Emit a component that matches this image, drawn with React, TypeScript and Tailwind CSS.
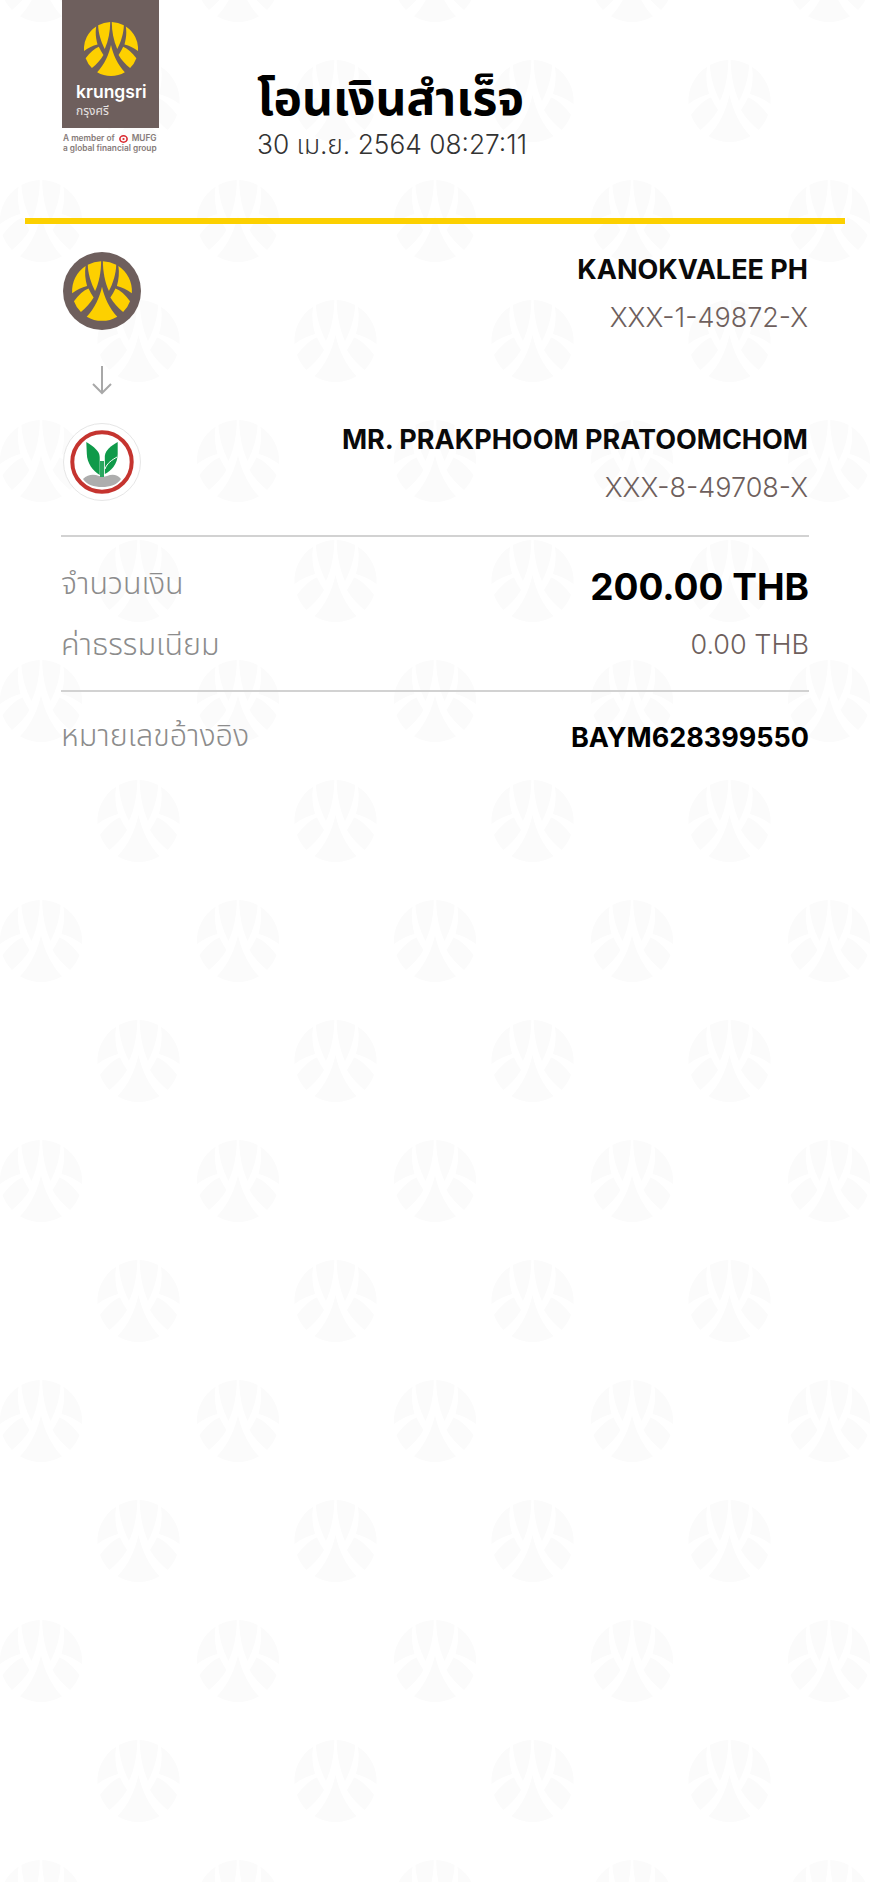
const LogoMark = ({ fill }: { fill: string }) => {
  const half = (
    <>
      <path d="M-1.2 -41A41 41 0 0 0 -19.5 -36C-19.5 -25 -15 -10 -9.5 0C-4 -12 -1.2 -27 -1.2 -41Z" />
      <path d="M-22.5 -34.3A41 41 0 0 0 -41 3C-34 -2 -28 -5 -20.5 -7C-23 -16 -24 -25 -22.5 -34.3Z" />
      <path d="M-18.5 -3.5C-25 -1 -32 5 -38.5 14A41 41 0 0 0 -29 29C-22 23 -16 17 -11.5 9C-14 5 -16.5 1 -18.5 -3.5Z" />
    </>
  );
  return (
    <g fill={fill}>
      {half}
      <g transform="scale(-1,1)">{half}</g>
      <path d="M0 -6C-3 8 -10 24 -21 35.2A41 41 0 0 0 21 35.2C10 24 3 8 0 -6Z" />
    </g>
  );
};

// faint emblem pattern behind the slip
const Watermark = () => (
  <svg className="absolute inset-0 h-full w-full" aria-hidden="true">
    <defs>
      <pattern id="wm" x="41" y="-19" width="197" height="240" patternUnits="userSpaceOnUse">
        <LogoMark fill="#fbfbfb" />
        <g transform="translate(197,0)">
          <LogoMark fill="#fbfbfb" />
        </g>
        <g transform="translate(0,240)">
          <LogoMark fill="#fbfbfb" />
        </g>
        <g transform="translate(197,240)">
          <LogoMark fill="#fbfbfb" />
        </g>
        <g transform="translate(97.5,120)">
          <LogoMark fill="#fbfbfb" />
        </g>
      </pattern>
    </defs>
    <rect width="100%" height="100%" fill="url(#wm)" />
  </svg>
);

const BrandLogo = () => (
  <div className="w-[97px] shrink-0">
    <div className="flex h-[128px] flex-col bg-[#6e5f5d] pt-[22px]">
      <svg viewBox="-41 -41 82 82" className="mx-auto h-[54px] w-[54px]">
        <LogoMark fill="#fdd000" />
      </svg>
      <div className="mt-[4px] pl-[14px] text-[17.5px] leading-[24px] font-semibold text-white">krungsri</div>
      <div className="pl-[14px] text-[12px] leading-[14px] text-[#e6e2e1]">กรุงศรี</div>
    </div>
    <div className="mt-[6px] pl-[1px] text-[8.3px] leading-[9.5px] font-semibold whitespace-nowrap text-[#857a78]">
      <div className="flex items-center">
        A member of
        <svg viewBox="0 0 12 10" className="mx-[3px] h-[8px] w-[11px]">
          <ellipse cx="6" cy="5" rx="4.5" ry="4" fill="none" stroke="#d9272e" strokeWidth="2" />
          <circle cx="6" cy="5" r="1.4" fill="#d9272e" />
        </svg>
        MUFG
      </div>
      <div>a global financial group</div>
    </div>
  </div>
);

const KrungsriBadge = () => (
  <svg viewBox="-45 -45 90 90" className="h-[78px] w-[78px]">
    <circle r="45" fill="#6e5f5d" />
    <g transform="scale(0.84)">
      <LogoMark fill="#fdd000" />
    </g>
  </svg>
);

const KBankBadge = () => (
  <svg viewBox="5 5 80 80" className="h-[80px] w-[80px]">
    <circle cx="45" cy="45" r="38.5" fill="#fff" stroke="#e6e6e6" strokeWidth="1" />
    <path d="M26 62C31 57 37 57 42 59C45 60 47 60 50 59C55 57 60 57 64 62C60 68 53 70 45 70C37 70 30 68 26 62Z" fill="#adadad" />
    <rect x="43" y="44" width="4" height="16" fill="#2aa760" />
    <path d="M29.3 25C37 30 42.7 34 42.7 40V58C36 54 30 46 29.8 36.7Z" fill="#0f9a4a" />
    <path d="M60.7 25C54 29 48.5 33 47.8 39V57C54 54 60.7 47 60.7 37Z" fill="#0f9a4a" />
    <path d="M48 52C50 46 55 43 60 40" fill="none" stroke="#fff" strokeWidth="1" />
    <circle cx="45" cy="45" r="29.7" fill="none" stroke="#c5342f" strokeWidth="4" />
  </svg>
);

const Account = ({ name, number }: { name: string; number: string }) => (
  <div className="pt-px text-right">
    <div className="text-[27px] leading-[34px] font-bold text-[#0a0a0a]">{name}</div>
    <div className="mt-[14px] text-[27px] leading-[34px] font-light text-[#6e5f5d]">{number}</div>
  </div>
);

export default function App() {
  return (
    <div
      className="relative h-[1882px] w-[870px] overflow-hidden bg-white"
      style={{ fontFamily: 'Inter, "Noto Sans", "Noto Sans Thai", "Open Sans", sans-serif' }}
    >
      <Watermark />
      <div className="relative">
        {/* Header */}
        <div className="flex h-[218px] pl-[62px]">
          <BrandLogo />
          <div className="ml-[98px] pt-[67px]">
            <h1 className="text-[48px] leading-[62px] font-bold text-black">โอนเงินสำเร็จ</h1>
            <div className="mt-px text-[26.3px] leading-[30px] font-light text-[#333333]">30 เม.ย. 2564 08:27:11</div>
          </div>
        </div>

        <div className="mx-[25px] h-[6px] bg-[#fcd000]" />

        {/* Accounts */}
        <div className="flex items-start justify-between pt-[28px] pr-[62px] pl-[63px]">
          <KrungsriBadge />
          <Account name="KANOKVALEE PH" number="XXX-1-49872-X" />
        </div>
        <div className="mt-[30px] pl-[91px]">
          <svg viewBox="0 0 22 30" className="h-[30px] w-[22px]" fill="none" stroke="#a8a8a8" strokeWidth="2">
            <path d="M11 1V28M2 19L11 28L20 19" />
          </svg>
        </div>
        <div className="mt-[27px] flex items-start justify-between pr-[62px] pl-[62px]">
          <KBankBadge />
          <Account name="MR. PRAKPHOOM PRATOOMCHOM" number="XXX-8-49708-X" />
        </div>

        {/* Amount */}
        <div className="mx-[61px] mt-[30px] border-t-2 border-[#d2d2d2]">
          <div className="flex h-[72px] items-center justify-between pt-[28px]">
            <span className="mb-[8px] text-[30.5px] leading-[44px] font-light text-[#8c8c8c]">จำนวนเงิน</span>
            <span className="text-[37px] leading-[44px] font-bold text-black">200.00 THB</span>
          </div>
          <div className="flex h-[81px] items-center justify-between pt-[14px] pb-[23px]">
            <span className="mb-[2px] text-[30.5px] leading-[44px] font-light text-[#8c8c8c]">ค่าธรรมเนียม</span>
            <span className="text-[27px] leading-[44px] font-light text-[#6e5f5d]">0.00 THB</span>
          </div>
        </div>

        {/* Reference */}
        <div className="mx-[61px] flex h-[70px] items-center justify-between border-t-2 border-[#d2d2d2] pt-[24px]">
          <span className="mb-[7px] text-[30.5px] leading-[44px] font-light text-[#8c8c8c]">หมายเลขอ้างอิง</span>
          <span className="text-[27px] leading-[44px] font-bold text-black">BAYM628399550</span>
        </div>
      </div>
    </div>
  );
}
